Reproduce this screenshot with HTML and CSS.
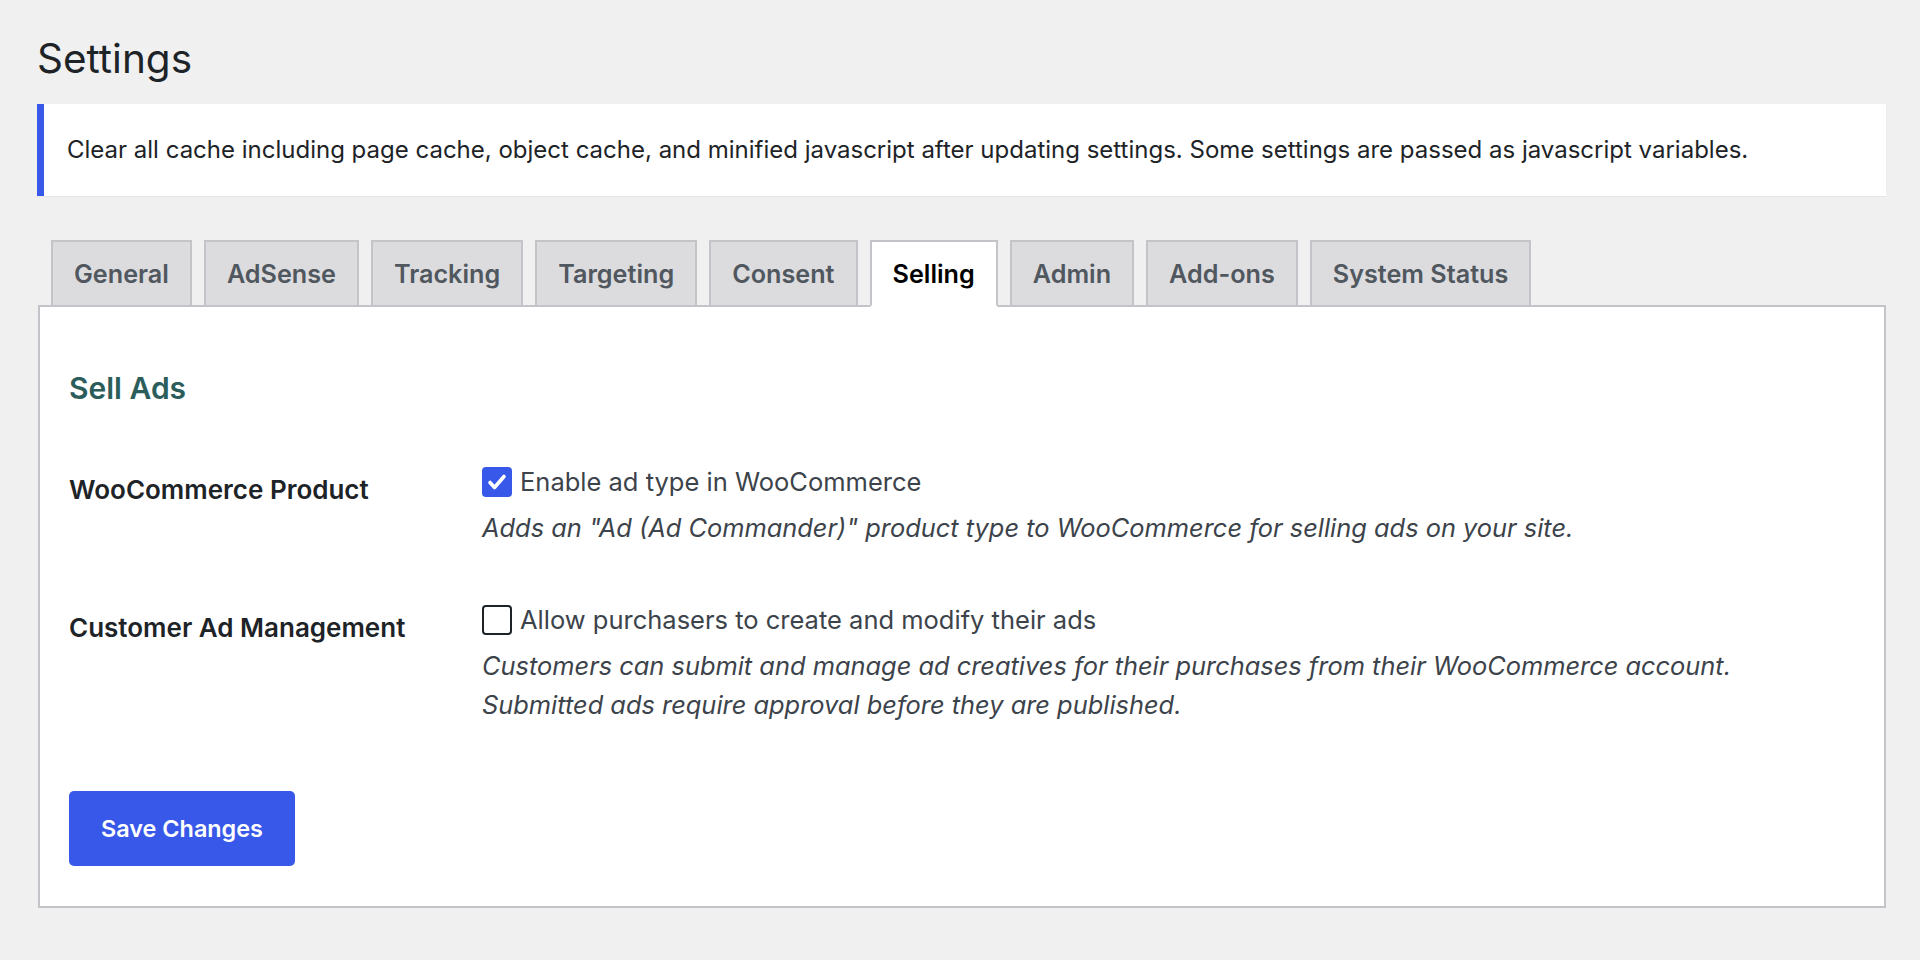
FILE: index.html
```html
<!DOCTYPE html>
<html lang="en">
<head>
<meta charset="utf-8">
<title>Settings</title>
<link rel="stylesheet" href="styles.css">
</head>
<body>
<div class="wrap">
  <h1 class="page-title">Settings</h1>
  <div class="notice">
    <p>Clear all cache including page cache, object cache, and minified javascript after updating settings. Some settings are passed as javascript variables.</p>
  </div>
  <nav class="tabs">
    <a class="tab">General</a>
    <a class="tab">AdSense</a>
    <a class="tab">Tracking</a>
    <a class="tab">Targeting</a>
    <a class="tab">Consent</a>
    <a class="tab tab-active">Selling</a>
    <a class="tab">Admin</a>
    <a class="tab">Add-ons</a>
    <a class="tab">System Status</a>
  </nav>
  <section class="panel">
    <h2 class="section-title">Sell Ads</h2>
    <div class="form-table">
      <div class="row">
        <div class="row-label">WooCommerce Product</div>
        <div class="row-field">
          <label class="check">
            <span class="box box-checked">
              <svg viewBox="0 0 30 30" width="30" height="30"><path d="M8 15.5 L12.5 20.5 L22 9.5" fill="none" stroke="#fff" stroke-width="3.6" stroke-linecap="round" stroke-linejoin="round"/></svg>
            </span>
            <span class="check-text">Enable ad type in WooCommerce</span>
          </label>
          <p class="description">Adds an "Ad (Ad Commander)" product type to WooCommerce for selling ads on your site.</p>
        </div>
      </div>
      <div class="row">
        <div class="row-label">Customer Ad Management</div>
        <div class="row-field">
          <label class="check">
            <span class="box"></span>
            <span class="check-text">Allow purchasers to create and modify their ads</span>
          </label>
          <p class="description">Customers can submit and manage ad creatives for their purchases from their WooCommerce account.<br>Submitted ads require approval before they are published.</p>
        </div>
      </div>
    </div>
    <button class="btn-primary" type="button">Save Changes</button>
  </section>
</div>
</body>
</html>
```

FILE: styles.css
```css
* { box-sizing: border-box; }

html, body {
  margin: 0;
  background: #f0f0f1;
}

body {
  font-family: Inter, "Liberation Sans", Arial, sans-serif;
  color: #1d2327;
}

.wrap {
  padding: 0 34px 0 37px;
}

.page-title {
  margin: 0;
  padding-top: 32px;
  font-size: 40.5px;
  font-weight: 400;
  line-height: 54px;
  color: #1d2327;
}

.notice {
  margin-top: 18px;
  height: 92px;
  background: #fff;
  border-left: 7px solid #3858e9;
  display: flex;
  align-items: center;
  padding: 0 23px;
  box-shadow: 0 1px 1px rgba(0, 0, 0, 0.04);
}

.notice p {
  margin: 0;
  font-size: 24px;
  line-height: 1.5;
  color: #1d2327;
}

.tabs {
  margin-top: 44px;
  margin-left: 1px;
  padding-left: 13px;
  display: flex;
  gap: 12px;
  border-bottom: 2px solid #c3c4c7;
}

.tab {
  display: flex;
  align-items: center;
  height: 67px;
  margin-bottom: -2px;
  padding: 0 21px;
  background: #dcdcde;
  border: 2px solid #c3c4c7;
  font-size: 25.2px;
  font-weight: 600;
  color: #50575e;
  text-decoration: none;
}

.tab-active {
  background: #fff;
  color: #000;
  border-bottom-color: #fff;
}

.panel {
  margin-left: 1px;
  background: #fff;
  border: 2px solid #c3c4c7;
  border-top: none;
  padding: 59px 31px 40px 29px;
}

.section-title {
  margin: 0;
  font-size: 30px;
  font-weight: 600;
  line-height: 44px;
  color: #2b5d5b;
}

.form-table {
  margin-top: 57px;
  display: flex;
  flex-direction: column;
  gap: 58px;
}

.row {
  display: grid;
  grid-template-columns: 413px 1fr;
}

.row-label {
  padding-top: 4px;
  font-size: 26px;
  font-weight: 600;
  line-height: 38px;
  color: #1d2327;
}

.check {
  display: flex;
  align-items: center;
  gap: 8px;
  height: 30px;
}

.box {
  width: 30px;
  height: 30px;
  flex: none;
  border: 2px solid #1d2327;
  border-radius: 4px;
  background: #fff;
}

.box-checked {
  border: none;
  background: #3858e9;
}

.box svg {
  display: block;
}

.check-text {
  font-size: 25.5px;
  line-height: 38px;
  color: #3c434a;
}

.description {
  margin: 11px 0 0;
  font-size: 25.4px;
  font-style: italic;
  line-height: 39px;
  color: #3c434a;
}

.btn-primary {
  display: block;
  margin-top: 67px;
  width: 226px;
  height: 75px;
  border: none;
  border-radius: 5px;
  background: #3858e9;
  color: #fff;
  font-family: Inter, "Liberation Sans", Arial, sans-serif;
  font-size: 23.4px;
  font-weight: 600;
  cursor: pointer;
}
```
